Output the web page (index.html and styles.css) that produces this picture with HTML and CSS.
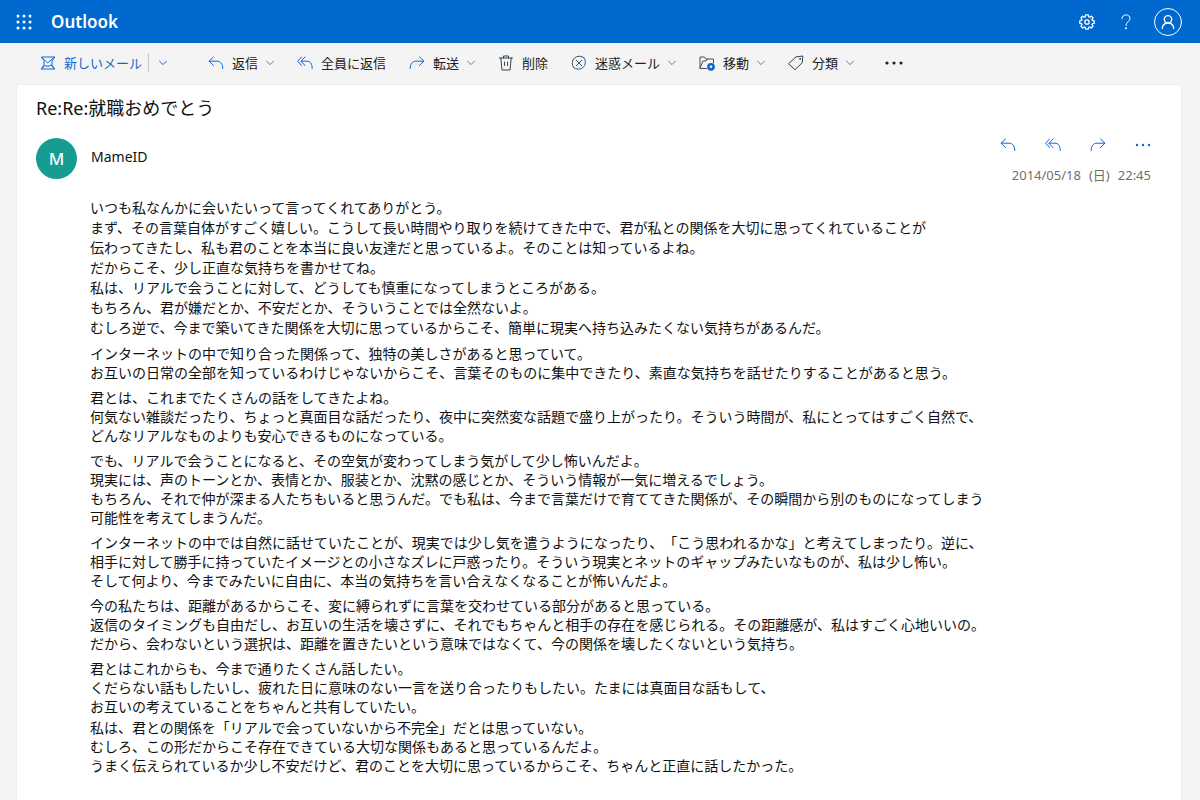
FILE: index.html
```html
<!DOCTYPE html>
<html lang="ja">
<head>
<meta charset="utf-8">
<meta name="viewport" content="width=device-width, initial-scale=1">
<title>Outlook</title>
<link rel="stylesheet" href="styles.css">
</head>
<body>
<svg class="sprite" aria-hidden="true">
  <symbol id="reply" viewBox="0 0 16 14"><path d="M5.500 1 1 5.200l4.500 4.300M1.200 5.200H9c3.500 0 5.800 2.500 5.800 7.300"/></symbol>
  <symbol id="reply-all" viewBox="0 0 16 14"><path d="M4.500 1 .6 5.200l3.900 4.300M8 1 4 5.200l4 4.300M4.200 5.200H10c3.200 0 5.200 2.500 5.200 7.300"/></symbol>
  <symbol id="forward" viewBox="0 0 16 14"><path d="M10.500 1 15 5.200l-4.500 4.300M14.800 5.200H7c-3.500 0-5.800 2.500-5.800 7.300"/></symbol>
  <symbol id="chevron" viewBox="0 0 8 6"><path d="M.6 1.200 4 4.600l3.400-3.400"/></symbol>
</svg>

<header class="topbar">
  <button class="icon-btn" aria-label="アプリ起動ツール">
    <svg class="waffle" viewBox="0 0 16 16"><g fill="currentColor" stroke="none"><circle cx="2" cy="2" r="1.500"/><circle cx="8" cy="2" r="1.500"/><circle cx="14" cy="2" r="1.500"/><circle cx="2" cy="8" r="1.500"/><circle cx="8" cy="8" r="1.500"/><circle cx="14" cy="8" r="1.500"/><circle cx="2" cy="14" r="1.500"/><circle cx="8" cy="14" r="1.500"/><circle cx="14" cy="14" r="1.500"/></g></svg>
  </button>
  <span class="brand">Outlook</span>
  <div class="topbar-actions">
    <button class="icon-btn" aria-label="設定">
      <svg class="gear" viewBox="0 0 16 16" stroke-width="1.300"><path d="M6.700.9h2.600l.4 1.900 1 .4L12.300 2.100l1.700 1.700-1 1.600.4 1 1.800.4v2.500l-1.800.4-.4 1 1 1.600-1.700 1.700-1.600-1-1 .4-.4 1.800H6.700l-.4-1.800-1-.4-1.600 1L2 12.300l1-1.600-.4-1-1.800-.4V6.800l1.800-.4.4-1-1-1.600 1.700-1.700 1.600 1.100 1-.4z"/><circle cx="8" cy="8" r="2.200"/></svg>
    </button>
    <button class="icon-btn" aria-label="ヘルプ">
      <svg class="help" viewBox="0 0 10 16"><path d="M1 4.600C1 2.300 2.700.9 5 .9s4 1.400 4 3.600c0 3-4 3.400-4 6.900"/><circle cx="5" cy="14.300" r="1" fill="currentColor" stroke="none"/></svg>
    </button>
    <button class="icon-btn" aria-label="アカウント">
      <svg class="account" viewBox="0 0 30 30"><circle cx="15" cy="15" r="13.500"/><g stroke-width="1.400"><circle cx="15" cy="12.300" r="3.700"/><path d="M9.300 21.300c.3-3.300 2.500-5.300 5.700-5.300s5.400 2 5.700 5.300"/></g></svg>
    </button>
  </div>
</header>

<nav class="toolbar" aria-label="メール操作">
  <div class="split">
    <button class="tool tool-new"><svg class="i16" viewBox="0 0 16 16"><path d="M14.500 2H1.500L4 5.500v4L1.500 14h13L12 10V6.500zM2 2.500l5.500 5.500L14 2.500M1.500 14 5 10.500l3 1 3-1.500 3.500 4"/></svg>新しいメール</button>
    <button class="tool tool-more" aria-label="新規作成のオプション"><svg class="chev"><use href="#chevron"/></svg></button>
  </div>
  <button class="tool"><svg class="arrow"><use href="#reply"/></svg>返信<svg class="chev"><use href="#chevron"/></svg></button>
  <button class="tool"><svg class="arrow"><use href="#reply-all"/></svg>全員に返信</button>
  <button class="tool"><svg class="arrow"><use href="#forward"/></svg>転送<svg class="chev"><use href="#chevron"/></svg></button>
  <button class="tool"><svg class="i16 dark" viewBox="0 0 16 16"><path d="M1.500 3h13M5.500 3V1h5v2M2.800 3l1.200 12h8l1.200-12M6.500 7v3.500M9.500 7v3.500"/></svg>削除</button>
  <button class="tool"><svg class="i16" viewBox="0 0 16 16"><path d="M2.500 12.500A7.200 7.200 0 0 1 13.100 2.900" stroke="#42505c"/><path d="M13.100 2.900A7.200 7.200 0 0 1 2.500 12.500"/><path d="m5.200 5.200 5.600 5.600M10.800 5.200l-5.600 5.600" stroke="#42505c"/></svg>迷惑メール<svg class="chev"><use href="#chevron"/></svg></button>
  <button class="tool"><svg class="i16" viewBox="0 0 16 16"><path d="M7.500 13.500H1V2h4.500L7 4h7.500v4M1 13 4 6h3l1.500-2" stroke="#42505c"/><circle cx="12" cy="11.800" r="2.600" stroke-width="2.600"/></svg>移動<svg class="chev"><use href="#chevron"/></svg></button>
  <button class="tool"><svg class="i16 dark" viewBox="0 0 16 16"><path d="M8.500 1.800 14.800 1l-.5 6.700-7.300 7L.8 9z"/><circle cx="12" cy="3.900" r=".5"/></svg>分類<svg class="chev"><use href="#chevron"/></svg></button>
  <button class="tool" aria-label="その他"><svg class="dots" viewBox="0 0 18 4"><g fill="#222" stroke="none"><circle cx="2" cy="2" r="1.600"/><circle cx="9" cy="2" r="1.600"/><circle cx="16" cy="2" r="1.600"/></g></svg></button>
</nav>

<main class="message">
  <h1 class="subject">Re:Re:就職おめでとう</h1>
  <div class="sender">
    <span class="avatar" aria-hidden="true">M</span>
    <span class="name">MameID</span>
    <div class="meta">
      <div class="quick">
        <button class="icon-btn" aria-label="返信"><svg class="arrow"><use href="#reply"/></svg></button>
        <button class="icon-btn" aria-label="全員に返信"><svg class="arrow"><use href="#reply-all"/></svg></button>
        <button class="icon-btn" aria-label="転送"><svg class="arrow"><use href="#forward"/></svg></button>
        <button class="icon-btn" aria-label="その他の操作"><svg class="arrow" viewBox="0 0 16 14"><g fill="currentColor" stroke="none"><circle cx="2" cy="7" r="1.200"/><circle cx="8" cy="7" r="1.200"/><circle cx="14" cy="7" r="1.200"/></g></svg></button>
      </div>
      <time class="date" datetime="2014-05-18T22:45"><span>2014/05/18</span><span>(日)</span><span>22:45</span></time>
    </div>
  </div>
  <article class="body">
    <p class="lead">いつも私なんかに会いたいって言ってくれてありがとう。<br>まず、その言葉自体がすごく嬉しい。こうして長い時間やり取りを続けてきた中で、君が私との関係を大切に思ってくれていることが<br>伝わってきたし、私も君のことを本当に良い友達だと思っているよ。そのことは知っているよね。<br>だからこそ、少し正直な気持ちを書かせてね。<br>私は、リアルで会うことに対して、どうしても慎重になってしまうところがある。<br>もちろん、君が嫌だとか、不安だとか、そういうことでは全然ないよ。<br>むしろ逆で、今まで築いてきた関係を大切に思っているからこそ、簡単に現実へ持ち込みたくない気持ちがあるんだ。</p>
    <p>インターネットの中で知り合った関係って、独特の美しさがあると思っていて。<br>お互いの日常の全部を知っているわけじゃないからこそ、言葉そのものに集中できたり、素直な気持ちを話せたりすることがあると思う。</p>
    <p>君とは、これまでたくさんの話をしてきたよね。<br>何気ない雑談だったり、ちょっと真面目な話だったり、夜中に突然変な話題で盛り上がったり。そういう時間が、私にとってはすごく自然で、<br>どんなリアルなものよりも安心できるものになっている。</p>
    <p>でも、リアルで会うことになると、その空気が変わってしまう気がして少し怖いんだよ。<br>現実には、声のトーンとか、表情とか、服装とか、沈黙の感じとか、そういう情報が一気に増えるでしょう。<br>もちろん、それで仲が深まる人たちもいると思うんだ。でも私は、今まで言葉だけで育ててきた関係が、その瞬間から別のものになってしまう<br>可能性を考えてしまうんだ。</p>
    <p>インターネットの中では自然に話せていたことが、現実では少し気を遣うようになったり、「こう思われるかな」と考えてしまったり。逆に、<br>相手に対して勝手に持っていたイメージとの小さなズレに戸惑ったり。そういう現実とネットのギャップみたいなものが、私は少し怖い。<br>そして何より、今までみたいに自由に、本当の気持ちを言い合えなくなることが怖いんだよ。</p>
    <p>今の私たちは、距離があるからこそ、変に縛られずに言葉を交わせている部分があると思っている。<br>返信のタイミングも自由だし、お互いの生活を壊さずに、それでもちゃんと相手の存在を感じられる。その距離感が、私はすごく心地いいの。<br>だから、会わないという選択は、距離を置きたいという意味ではなくて、今の関係を壊したくないという気持ち。</p>
    <p>君とはこれからも、今まで通りたくさん話したい。<br>くだらない話もしたいし、疲れた日に意味のない一言を送り合ったりもしたい。たまには真面目な話もして、<br>お互いの考えていることをちゃんと共有していたい。</p>
    <p class="closing">私は、君との関係を「リアルで会っていないから不完全」だとは思っていない。<br>むしろ、この形だからこそ存在できている大切な関係もあると思っているんだよ。<br>うまく伝えられているか少し不安だけど、君のことを大切に思っているからこそ、ちゃんと正直に話したかった。</p>
  </article>
</main>
</body>
</html>
```
FILE: styles.css
```css
* { box-sizing: border-box; }

body {
  margin: 0;
  min-height: 100vh;
  display: flex;
  flex-direction: column;
  background: #f4f4f4;
  color: #111;
  font-family: "Noto Sans", "Noto Sans CJK JP", sans-serif;
  font-size: 14px;
  text-spacing-trim: space-all;
}

button {
  display: flex;
  align-items: center;
  padding: 0;
  border: 0;
  background: none;
  color: inherit;
  font: inherit;
  white-space: nowrap;
}

svg {
  display: block;
  flex: none;
  fill: none;
  stroke: currentColor;
  stroke-linecap: round;
  stroke-linejoin: round;
}

.sprite { position: absolute; width: 0; height: 0; }

.topbar {
  display: flex;
  align-items: center;
  height: 43px;
  padding: 0 17px 0 16px;
  background: #0069d0;
  color: #fff;
}

.waffle { width: 16px; height: 16px; }
.brand { margin-left: 19px; font-size: 17px; font-weight: 600; }
.topbar-actions { display: flex; align-items: center; gap: 22px; margin-left: auto; }
.gear { width: 16px; height: 16px; }
.help { width: 10px; height: 16px; margin-left: 4px; }
.account { width: 30px; height: 30px; }

.toolbar {
  display: flex;
  align-items: center;
  gap: 23px;
  height: 41px;
  padding: 0 40px 2px;
  font-size: 13px;
  color: #222;
}

.split { display: flex; align-items: center; margin-right: 18px; color: #1068cc; }
.tool { gap: 8px; }
.tool-more { height: 19px; margin-left: 6px; padding-left: 10px; border-left: 1px solid #c8c8c8; }
.i16 { width: 16px; height: 16px; color: #1068cc; }
.i16.dark { color: #34424e; }
.arrow { width: 16px; height: 14px; color: #1068cc; }
.chev { width: 8px; height: 6px; color: #777; }
.tool-more .chev { color: #1068cc; }
.dots { width: 18px; height: 4px; margin-left: 8px; }

.message {
  flex: 1;
  margin: 0 18px 0 16px;
  padding: 8px 20px 24px 19px;
  border: 1px solid #ececec;
  border-bottom: 0;
  border-radius: 4px 4px 0 0;
  background: #fff;
}

.subject { margin: 0; font-size: 18px; font-weight: 400; line-height: 30px; }

.sender { display: flex; align-items: flex-start; margin-top: 15px; }

.avatar {
  display: grid;
  place-items: center;
  width: 41px;
  height: 41px;
  border-radius: 50%;
  background: #169c91;
  color: #fff;
  font-size: 17px;
  font-weight: 500;
}

.name { margin-left: 14px; line-height: 38px; }
.meta { margin-left: auto; padding-right: 10px; }
.quick { display: flex; justify-content: flex-end; gap: 29px; }
.date { display: flex; justify-content: flex-end; gap: 8px; margin-top: 14px; font-size: 13px; line-height: 18px; color: #707070; }

.body { margin: 14px 0 0 54px; }
.body p { margin: 6px 0 0; line-height: 19px; }
.body .lead { margin-top: 0; line-height: 20px; }
.body .closing { margin-top: 2px; }
```
